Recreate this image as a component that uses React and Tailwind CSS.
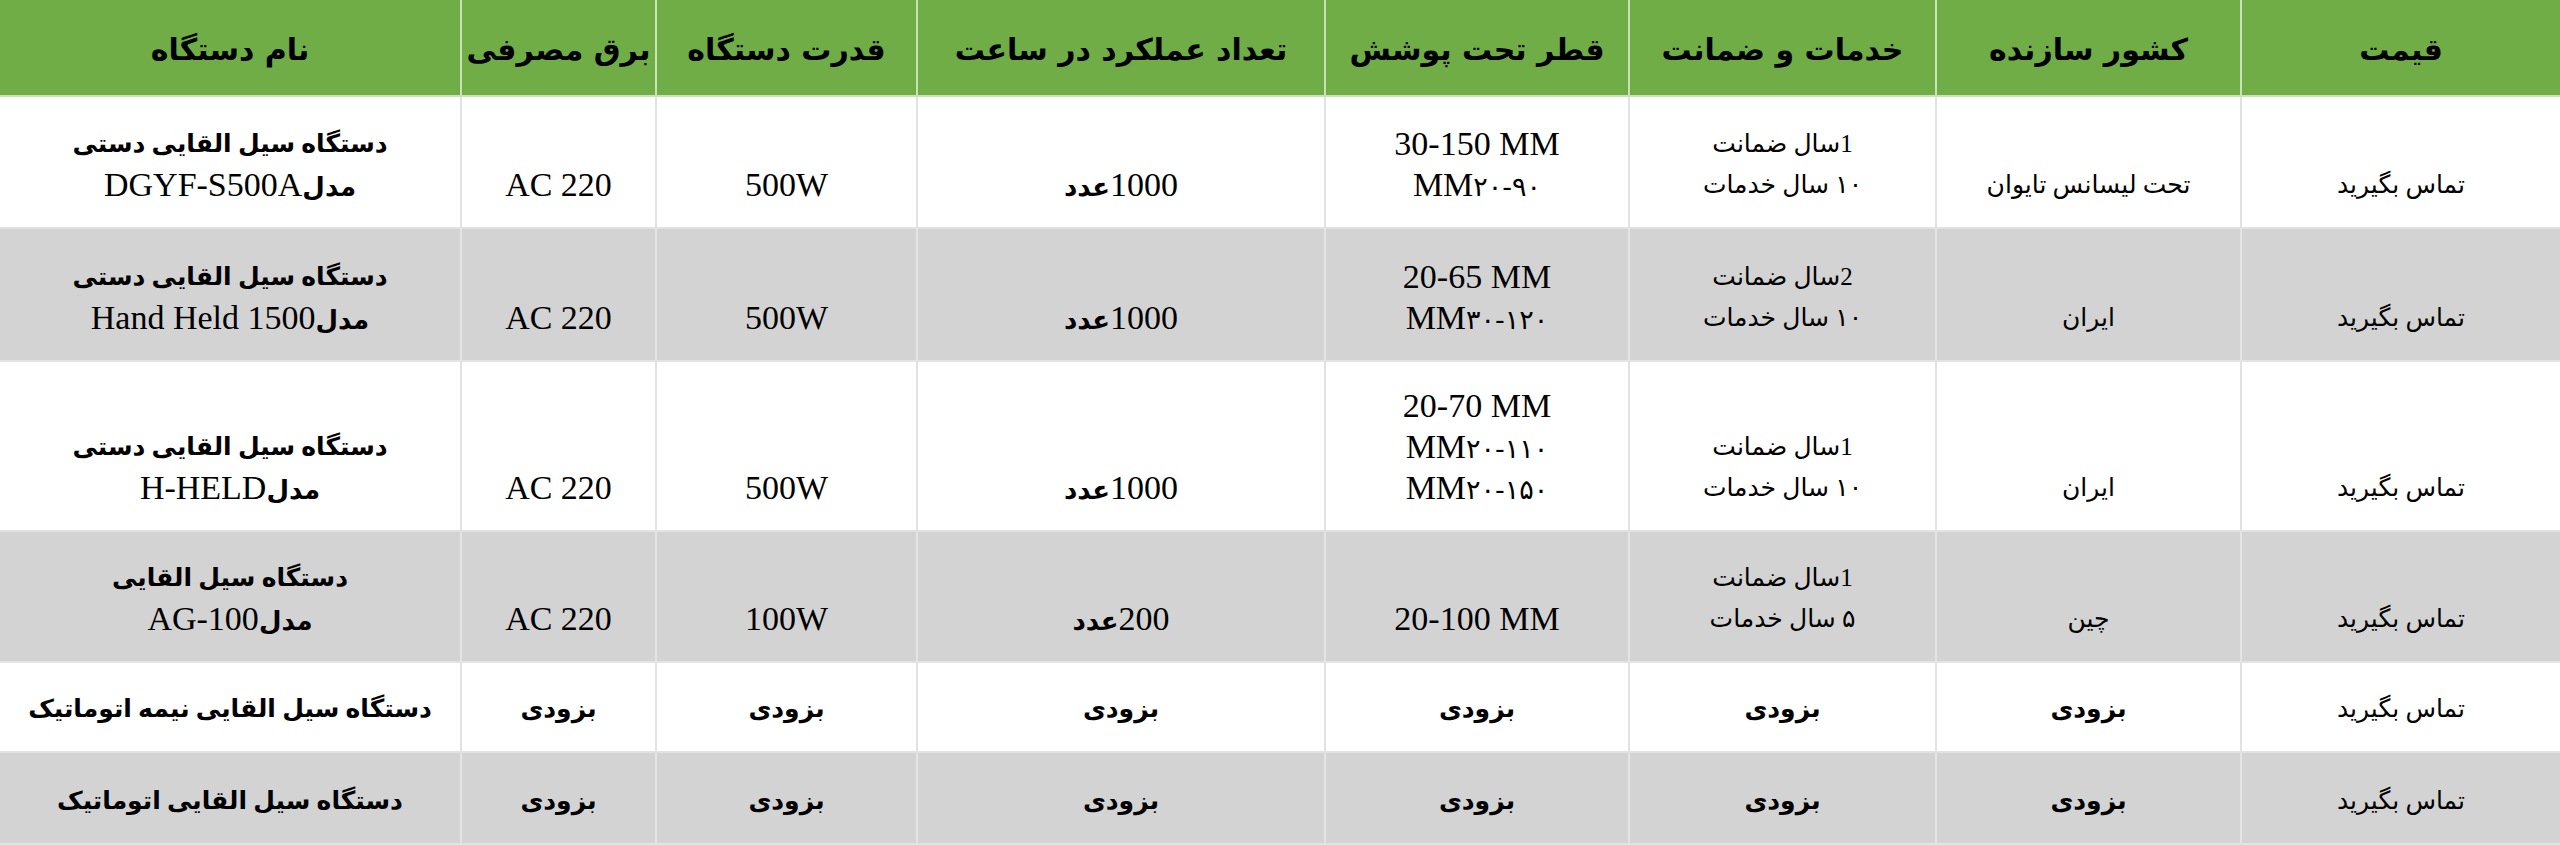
import React from 'react';

const headers = [
  'نام دستگاه',
  'برق مصرفی',
  'قدرت دستگاه',
  'تعداد عملکرد در ساعت',
  'قطر تحت پوشش',
  'خدمات و ضمانت',
  'کشور سازنده',
  'قیمت',
];

// each cell is a list of lines; a line is [text, kind]
// kind: 'fa' persian body, 'faB' persian bold, 'en' latin, 'ltr' latin forced ltr, 'mix' latin + persian
const rows = [
  {
    gray: false,
    cells: [
      [['دستگاه سیل القایی دستی', 'faB'], ['مدلDGYF-S500A', 'mix']],
      [['AC 220', 'en']],
      [['500W', 'en']],
      [['1000عدد', 'mix']],
      [['30-150 MM', 'en'], ['MM۲۰-۹۰', 'ltr']],
      [['1سال ضمانت', 'fa'], ['۱۰ سال خدمات', 'fa']],
      [['تحت لیسانس تایوان', 'fa']],
      [['تماس بگیرید', 'fa']],
    ],
  },
  {
    gray: true,
    cells: [
      [['دستگاه سیل القایی دستی', 'faB'], ['مدلHand Held 1500', 'mix']],
      [['AC 220', 'en']],
      [['500W', 'en']],
      [['1000عدد', 'mix']],
      [['20-65 MM', 'en'], ['MM۳۰-۱۲۰', 'ltr']],
      [['2سال ضمانت', 'fa'], ['۱۰ سال خدمات', 'fa']],
      [['ایران', 'fa']],
      [['تماس بگیرید', 'fa']],
    ],
  },
  {
    gray: false,
    cells: [
      [['دستگاه سیل القایی دستی', 'faB'], ['مدلH-HELD', 'mix']],
      [['AC 220', 'en']],
      [['500W', 'en']],
      [['1000عدد', 'mix']],
      [['20-70 MM', 'en'], ['MM۲۰-۱۱۰', 'ltr'], ['MM۲۰-۱۵۰', 'ltr']],
      [['1سال ضمانت', 'fa'], ['۱۰ سال خدمات', 'fa']],
      [['ایران', 'fa']],
      [['تماس بگیرید', 'fa']],
    ],
  },
  {
    gray: true,
    cells: [
      [['دستگاه سیل القایی', 'faB'], ['مدلAG-100', 'mix']],
      [['AC 220', 'en']],
      [['100W', 'en']],
      [['200عدد', 'mix']],
      [['20-100 MM', 'en']],
      [['1سال ضمانت', 'fa'], ['۵ سال خدمات', 'fa']],
      [['چین', 'fa']],
      [['تماس بگیرید', 'fa']],
    ],
  },
  {
    gray: false,
    cells: [
      [['دستگاه سیل القایی نیمه اتوماتیک', 'faB']],
      [['بزودی', 'faB']],
      [['بزودی', 'faB']],
      [['بزودی', 'faB']],
      [['بزودی', 'faB']],
      [['بزودی', 'faB']],
      [['بزودی', 'faB']],
      [['تماس بگیرید', 'fa']],
    ],
  },
  {
    gray: true,
    cells: [
      [['دستگاه سیل القایی اتوماتیک', 'faB']],
      [['بزودی', 'faB']],
      [['بزودی', 'faB']],
      [['بزودی', 'faB']],
      [['بزودی', 'faB']],
      [['بزودی', 'faB']],
      [['بزودی', 'faB']],
      [['تماس بگیرید', 'fa']],
    ],
  },
];

const lineClass = {
  en: 'text-[34px]',
  ltr: 'text-[34px]',
  mix: 'text-[34px]',
  fa: 'text-[25px]',
  faB: 'text-[25px] font-bold',
};

// persian runs inside latin lines are set smaller, like the arabic font in the sheet
const persianRun = /([\u0600-\u06FF](?:[\u0600-\u06FF-]*[\u0600-\u06FF])?)/;

const Line = ({ text, kind }) => {
  const isLatin = kind === 'en' || kind === 'ltr' || kind === 'mix';
  const parts = isLatin ? text.split(persianRun) : [text];
  return (
    <div
      dir={kind === 'ltr' || kind === 'en' ? 'ltr' : 'rtl'}
      className={`leading-[41px] whitespace-nowrap ${lineClass[kind]}`}
    >
      {parts.map((p, i) =>
        isLatin && persianRun.test(p) ? (
          <span
            key={i}
            className={`leading-none font-['DejaVu_Sans',sans-serif] ${
              kind === 'mix' ? 'text-[26px] font-bold' : 'text-[27px]'
            }`}
          >
            {p}
          </span>
        ) : (
          <React.Fragment key={i}>{p}</React.Fragment>
        )
      )}
    </div>
  );
};

export default function App() {
  return (
    <div className="w-[2560px] h-[845px] bg-white text-black overflow-hidden font-['Liberation_Serif','DejaVu_Sans',serif]">
      <div className="grid grid-cols-[462px_195px_261px_408px_304px_307px_305px_318px] grid-rows-[97px_132px_133px_170px_131px_90px_92px]">
        {headers.map((h, i) => (
          <div
            key={h}
            dir="rtl"
            className={`flex items-center justify-center pt-[3px] bg-[#70ad47] border-b-2 border-[#c9e2b8] text-[30px] font-bold font-['DejaVu_Sans',sans-serif] ${i < 7 ? 'border-r-2' : ''}`}
          >
            {h}
          </div>
        ))}

        {rows.map((row, r) =>
          row.cells.map((cell, c) => (
            <div
              key={`${r}-${c}`}
              className={`flex flex-col items-center justify-end pb-[22px] text-center border-b-2 ${
                row.gray ? 'bg-[#d3d3d3] border-[#e4e4e4]' : 'bg-white border-[#e2e2e2]'
              } ${c < 7 ? 'border-r-2' : ''}`}
            >
              {cell.map(([text, kind], k) => (
                <Line key={k} text={text} kind={kind} />
              ))}
            </div>
          ))
        )}
      </div>
    </div>
  );
}
